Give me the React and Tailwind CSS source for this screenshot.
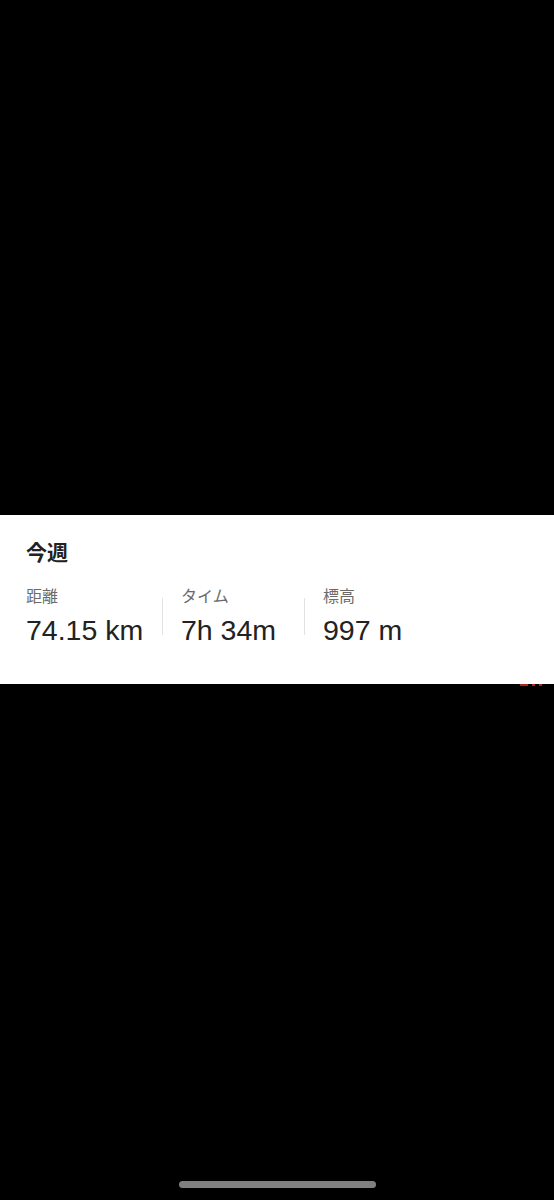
export default function App() {
  const font = { fontFamily: '"Noto Sans CJK JP", "Liberation Sans", sans-serif' };
  const num = { fontFamily: '"Liberation Sans", Arial, sans-serif' };
  return (
    <div className="w-[554px] h-[1200px] bg-black flex flex-col relative" style={font}>
      <div className="h-[515px]" />
      <div className="bg-white h-[169px] pl-[26px] pt-[22px] flex flex-col">
        <div className="text-[21px] leading-[28px] font-bold text-[#222]">今週</div>
        <div className="flex mt-[19px]">
          <div className="w-[136px] flex flex-col">
            <div className="text-[16px] leading-[22px] text-[#6b6b6b]">距離</div>
            <div className="text-[28.5px] leading-[34px] text-[#222] mt-[7px]" style={num}>74.15 km</div>
          </div>
          <div className="w-px bg-[#e2e2e2] mt-[14px] h-[37px]" />
          <div className="w-[141px] pl-[18px] flex flex-col">
            <div className="text-[16px] leading-[22px] text-[#6b6b6b]">タイム</div>
            <div className="text-[28.5px] leading-[34px] text-[#222] mt-[7px]" style={num}>7h 34m</div>
          </div>
          <div className="w-px bg-[#e2e2e2] mt-[14px] h-[37px]" />
          <div className="pl-[18px] flex flex-col">
            <div className="text-[16px] leading-[22px] text-[#6b6b6b]">標高</div>
            <div className="text-[28.5px] leading-[34px] text-[#222] mt-[7px]" style={num}>997 m</div>
          </div>
        </div>
      </div>
      <div className="absolute left-[520px] top-[684px] flex gap-[4px]">
        <div className="w-[8px] h-[2px] bg-[#b5241c]" />
        <div className="w-[3px] h-[2px] bg-[#b5241c]" />
        <div className="w-[3px] h-[2px] bg-[#b5241c]" />
      </div>
      <div className="flex-1" />
      <div className="flex justify-center pb-[12px]">
        <div className="w-[197px] h-[7px] rounded-full bg-[#808080]" />
      </div>
    </div>
  );
}
